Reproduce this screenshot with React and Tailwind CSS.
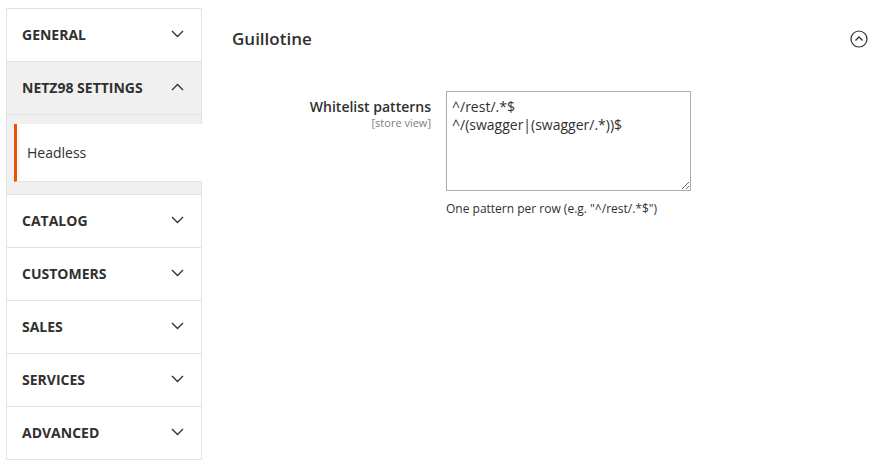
import { useState } from 'react';

const sections = ['CATALOG', 'CUSTOMERS', 'SALES', 'SERVICES', 'ADVANCED'];

function Chevron({ up }) {
  return (
    <svg width="13" height="8" viewBox="0 0 13 8" className="shrink-0">
      <path
        d={up ? 'M1 7 L6.5 1.5 L12 7' : 'M1 1 L6.5 6.5 L12 1'}
        fill="none"
        stroke="#333"
        strokeWidth="1.4"
      />
    </svg>
  );
}

function NavRow({ title, up, active }) {
  return (
    <div
      className={`h-[53px] border-b border-[#e3e3e3] flex items-center justify-between pl-[15px] pr-[17px] pb-[2px] ${
        active ? 'bg-[#f0f0f0]' : 'bg-white'
      }`}
    >
      <span className="text-[14px] font-bold text-[#303030]">{title}</span>
      <Chevron up={up} />
    </div>
  );
}

export default function App() {
  const [patterns, setPatterns] = useState('^/rest/.*$\n^/(swagger|(swagger/.*))$');

  return (
    <div className="flex bg-white min-h-[473px] pt-[8px] pl-[6px] font-['Open_Sans',sans-serif] text-[#303030]">
      <div className="w-[196px] shrink-0 self-start border-x border-t border-[#e3e3e3]">
        <NavRow title="GENERAL" />
        <NavRow title="NETZ98 SETTINGS" up active />
        <div className="bg-[#f0f0f0] pt-[9px] pb-[12px] pl-[7px] border-b border-[#e3e3e3]">
          <div className="h-[58px] mr-[-1px] bg-white border-l-[3px] border-[#eb5202] border-b border-b-[#e3e3e3] flex items-center pl-[10px]">
            <span className="text-[14px]">Headless</span>
          </div>
        </div>
        {sections.map((s) => (
          <NavRow key={s} title={s} />
        ))}
      </div>

      <div className="flex-1 ml-[30px] pr-[17px] pt-[19px]">
        <div className="flex items-center justify-between h-[24px]">
          <h2 className="text-[17px] font-semibold">Guillotine</h2>
          <svg width="18" height="18" viewBox="0 0 18 18">
            <circle cx="9" cy="9" r="8" fill="none" stroke="#303030" strokeWidth="1.2" />
            <path d="M5.5 10.5 L9 7 L12.5 10.5" fill="none" stroke="#303030" strokeWidth="1.3" />
          </svg>
        </div>

        <div className="flex mt-[40px]">
          <div className="w-[200px] text-right pt-[7px] pr-[1px]">
            <div className="text-[14px] leading-[18px] font-semibold">Whitelist patterns</div>
            <div className="text-[11px] leading-[12px] text-[#808080] mt-[1px]">[store view]</div>
          </div>
          <div className="ml-[14px]">
            <textarea
              value={patterns}
              onChange={(e) => setPatterns(e.target.value)}
              className="block w-[245px] h-[100px] border border-[#adadad] px-[5px] py-[6px] text-[14px] leading-[18px] text-[#303030] outline-none"
            />
            <p className="text-[12px] leading-[16px] mt-[10px]">One pattern per row (e.g. "^/rest/.*$")</p>
          </div>
        </div>
      </div>
    </div>
  );
}
